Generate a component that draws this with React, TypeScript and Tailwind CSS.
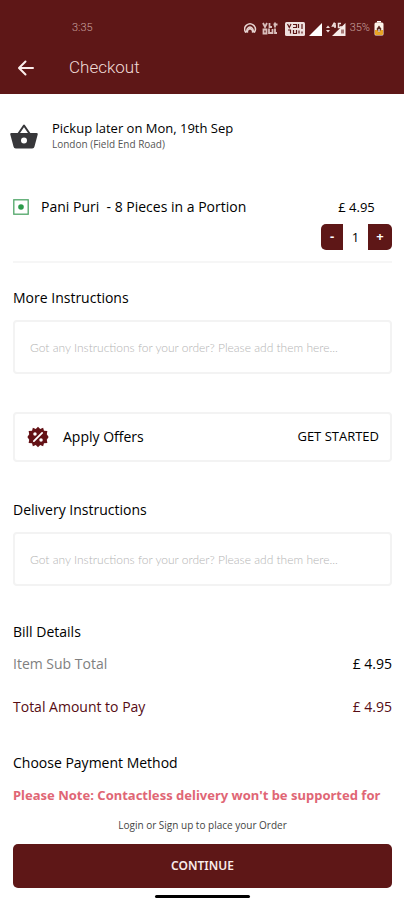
import { useState } from "react";

function BackArrow() {
  return (
    <svg viewBox="0 0 18 16" className="h-4 w-[18px]" fill="none" stroke="#fbeeec" strokeWidth="2" strokeLinecap="round" strokeLinejoin="round" aria-hidden="true">
      <path d="M16 8H2.500M8.500 1.500L2 8l6.500 6.500" />
    </svg>
  );
}

function StatusIcons() {
  return (
    <svg viewBox="0 0 102 18" className="h-[18px] w-[102px]" aria-hidden="true">
      <g fill="none" stroke="#e6d3d0" strokeWidth="1.500" strokeLinecap="round">
        <path d="M1.500 13a5.300 5.300 0 1 1 9 0" />
        <path d="M3.600 13a3 3 0 1 1 4.800 0" />
        <path d="M2 13l3-3M10 13l-3-3" />
      </g>
      <circle cx="6" cy="9.500" r="1.300" fill="#e6d3d0" />
      <g stroke="#d9bfbc" strokeWidth="1.800" fill="none">
        <path d="M19 4l2 4 2-4M25.500 4v4h2.500M31 3.500v5M29.500 5.500h4" />
        <path d="M19.500 10.500h3v4h-3zM25 9.500v4.500h3.500v-4M31 9.500v4.500h2" />
      </g>
      <rect x="41" y="3" width="20" height="14" rx="1.500" fill="#efe0de" />
      <g stroke="#5e1717" strokeWidth="1.200" fill="none">
        <path d="M43.500 5l1.800 3.500L47 5M49 5.500h3.500v3H49M54.500 5v4M58 5v5" />
        <path d="M44 11h2.500v3.500M49.500 11v3.500h3V11M55 11.500v3M58 12.500v2" />
      </g>
      <path d="M65 17L78 4v13z" fill="#fff" />
      <path d="M88 17L101.500 4v13z" fill="#f6ebe9" />
      <g fill="#f0dfdd">
        <path d="M82 9l2-2.500L86 9zM82 11h4l-2 2.500z" />
      </g>
      <path d="M90.500 3.500L88.500 7h3.500M91 4v5M97 4.500h-2.500v4H97V7" stroke="#f0dfdd" strokeWidth="1.500" fill="none" />
      <path d="M97 10.500h3v4h-3z" fill="#a87a77" />
    </svg>
  );
}

function BatteryIcon() {
  return (
    <svg viewBox="0 0 10 15" className="h-[15px] w-2.5" aria-hidden="true">
      <path d="M3 0h4v1.500H3z" fill="#fff" />
      <rect x="0.500" y="1.500" width="9" height="13" rx="1.500" fill="#fdf3ea" />
      <path d="M1 9h8v4a1 1 0 0 1-1 1H2a1 1 0 0 1-1-1z" fill="#e9a526" />
      <path d="M5 4.500L7.500 8 5 11.500 2.500 8z" fill="#5a2a22" />
      <path d="M5 8v3" stroke="#fff" strokeWidth="1.200" />
    </svg>
  );
}

function BasketIcon() {
  return (
    <svg viewBox="0 0 28 25" className="h-[25px] w-7 shrink-0" aria-hidden="true">
      <path d="M8.500 9.500L14 1.500l5.500 8" fill="none" stroke="#37373a" strokeWidth="2" strokeLinejoin="round" strokeLinecap="round" />
      <path
        fill="#37373a"
        fillRule="evenodd"
        d="M1.500 9h25a1.200 1.200 0 0 1 1.200 1.500l-3.200 12A2.400 2.400 0 0 1 22.200 24.500H5.800A2.400 2.400 0 0 1 3.500 22.500L.300 10.500A1.200 1.200 0 0 1 1.500 9zM14 13.500a3 3 0 1 0 0 6 3 3 0 0 0 0-6z"
      />
    </svg>
  );
}

function VegMark() {
  return (
    <svg viewBox="0 0 16 16" className="h-4 w-4 shrink-0" role="img" aria-label="Vegetarian">
      <rect x="0.800" y="0.800" width="14.400" height="14.400" fill="#fff" stroke="#4fa567" strokeWidth="1.300" />
      <circle cx="8" cy="8" r="2.800" fill="#2c9b4b" />
    </svg>
  );
}

function OfferBadge() {
  return (
    <svg viewBox="0 0 24 24" className="h-[22px] w-[22px] shrink-0" aria-hidden="true">
      <path
        fill="#641216"
        d="M12 .800l2.400 2.500 3.200-1.500 .900 3.500 3.700.200-.600 3.500 2 3-2 3 .600 3.500-3.700.200-.900 3.500-3.200-1.500L12 23.200l-2.400-2.500-3.200 1.500-.900-3.500-3.700-.200.600-3.500-2-3 2-3-.600-3.500 3.700-.200.900-3.500 3.200 1.500z"
      />
      <path d="M16.500 7.500l-9 9" stroke="#fff" strokeWidth="2" strokeLinecap="round" />
      <circle cx="8.700" cy="8.800" r="1.900" fill="#fff" />
      <circle cx="15.300" cy="15.300" r="1.900" fill="#fff" />
    </svg>
  );
}

function Instructions({ id, title }: { id: string; title: string }) {
  return (
    <div>
      <label htmlFor={id} className="block text-[14px] leading-5 font-medium">
        {title}
      </label>
      <input
        id={id}
        type="text"
        placeholder="Got any Instructions for your order? Please add them here..."
        className="mt-3 block h-[54px] w-full rounded-sm border-2 border-[#f3f3f3] px-[15px] font-['Lato',sans-serif] text-[12px] font-light outline-none placeholder:text-[#b4b4b4]"
      />
    </div>
  );
}

export default function App() {
  const [count, setCount] = useState(1);
  return (
    <div className="flex min-h-screen flex-col bg-white font-['Open_Sans','Noto_Sans',sans-serif] text-black">
      <header className="bg-[#5e1717] pt-4">
        <div className="flex h-6 items-center justify-between pr-5 pl-[72px] font-['Roboto',sans-serif] text-[11px] font-light text-[#c9a3a0]">
          <span>3:35</span>
          <div className="flex items-center gap-1">
            <StatusIcons />
            <span>35%</span>
            <BatteryIcon />
          </div>
        </div>
        <div className="flex h-[54px] items-center gap-[34px] pt-0.5 pl-[17px]">
          <button type="button" aria-label="Back">
            <BackArrow />
          </button>
          <h1 className="font-['Roboto',sans-serif] text-[17px] font-light text-[#f0dcd8]">Checkout</h1>
        </div>
      </header>

      <main className="flex-1 pr-3 pl-[13px]">
        <section className="-ml-[3px] flex items-center gap-3.5 pt-[26px]">
          <BasketIcon />
          <div>
            <p className="text-[13px] leading-4 font-medium">Pickup later on Mon, 19th Sep</p>
            <p className="text-[10px] leading-4 text-[#555]">London (Field End Road)</p>
          </div>
        </section>

        <section className="mt-[45px] border-b-2 border-[#f6f6f6] pb-[11px]">
          <div className="flex h-5 items-center text-[14px] leading-5 font-medium">
            <VegMark />
            <h2 className="ml-3 flex-1 whitespace-pre">Pani Puri  - 8 Pieces in a Portion</h2>
            <span className="w-[71px] text-center text-[13px]">£ 4.95</span>
          </div>
          <div className="mt-[7px] flex justify-end text-[13px]">
            <button type="button" aria-label="Remove one" onClick={() => setCount(Math.max(0, count - 1))} className="h-[26px] w-[22px] rounded-l-[5px] bg-[#5e1717] font-bold text-white">
              -
            </button>
            <span className="w-[25px] text-center leading-[26px]">{count}</span>
            <button type="button" aria-label="Add one" onClick={() => setCount(count + 1)} className="h-[26px] w-6 rounded-r-[5px] bg-[#5e1717] font-bold text-white">
              +
            </button>
          </div>
        </section>

        <section className="mt-[25px]">
          <Instructions id="more" title="More Instructions" />
        </section>

        <section className="mt-[38px] flex h-[50px] items-center rounded-sm border-2 border-[#f3f3f3] pr-[11px] pl-3">
          <OfferBadge />
          <h2 className="ml-3.5 flex-1 text-[14px] leading-5 font-medium">Apply Offers</h2>
          <button type="button" className="text-[13px] font-medium">
            GET STARTED
          </button>
        </section>

        <section className="mt-[38px]">
          <Instructions id="delivery" title="Delivery Instructions" />
        </section>

        <section className="mt-9 text-[14px] leading-5 font-medium">
          <h2>Bill Details</h2>
          <div className="mt-3 flex justify-between">
            <span className="text-[#808080]">Item Sub Total</span>
            <span>£ 4.95</span>
          </div>
          <div className="mt-[23px] flex justify-between text-[#560c14]">
            <span>Total Amount to Pay</span>
            <span>£ 4.95</span>
          </div>
        </section>

        <section className="mt-9 text-[14px] leading-5">
          <h2 className="font-medium">Choose Payment Method</h2>
          <p className="mt-3 font-['Noto_Sans',sans-serif] text-[13px] leading-5 font-bold whitespace-nowrap text-[#e06675]">
            Please Note: Contactless delivery won't be supported for
          </p>
        </section>
      </main>

      <footer className="flex flex-col items-center pt-3 pr-3 pb-0.5 pl-[13px]">
        <p className="text-[10px] leading-4 text-[#444]">Login or Sign up to place your Order</p>
        <button type="button" className="mt-[11px] h-11 w-full rounded-[5px] bg-[#5e1717] font-['Noto_Sans',sans-serif] text-[12px] font-semibold text-[#f8ebe9]">
          CONTINUE
        </button>
        <div className="mt-[7px] h-[3px] w-[95px] rounded-full bg-black" />
      </footer>
    </div>
  );
}
